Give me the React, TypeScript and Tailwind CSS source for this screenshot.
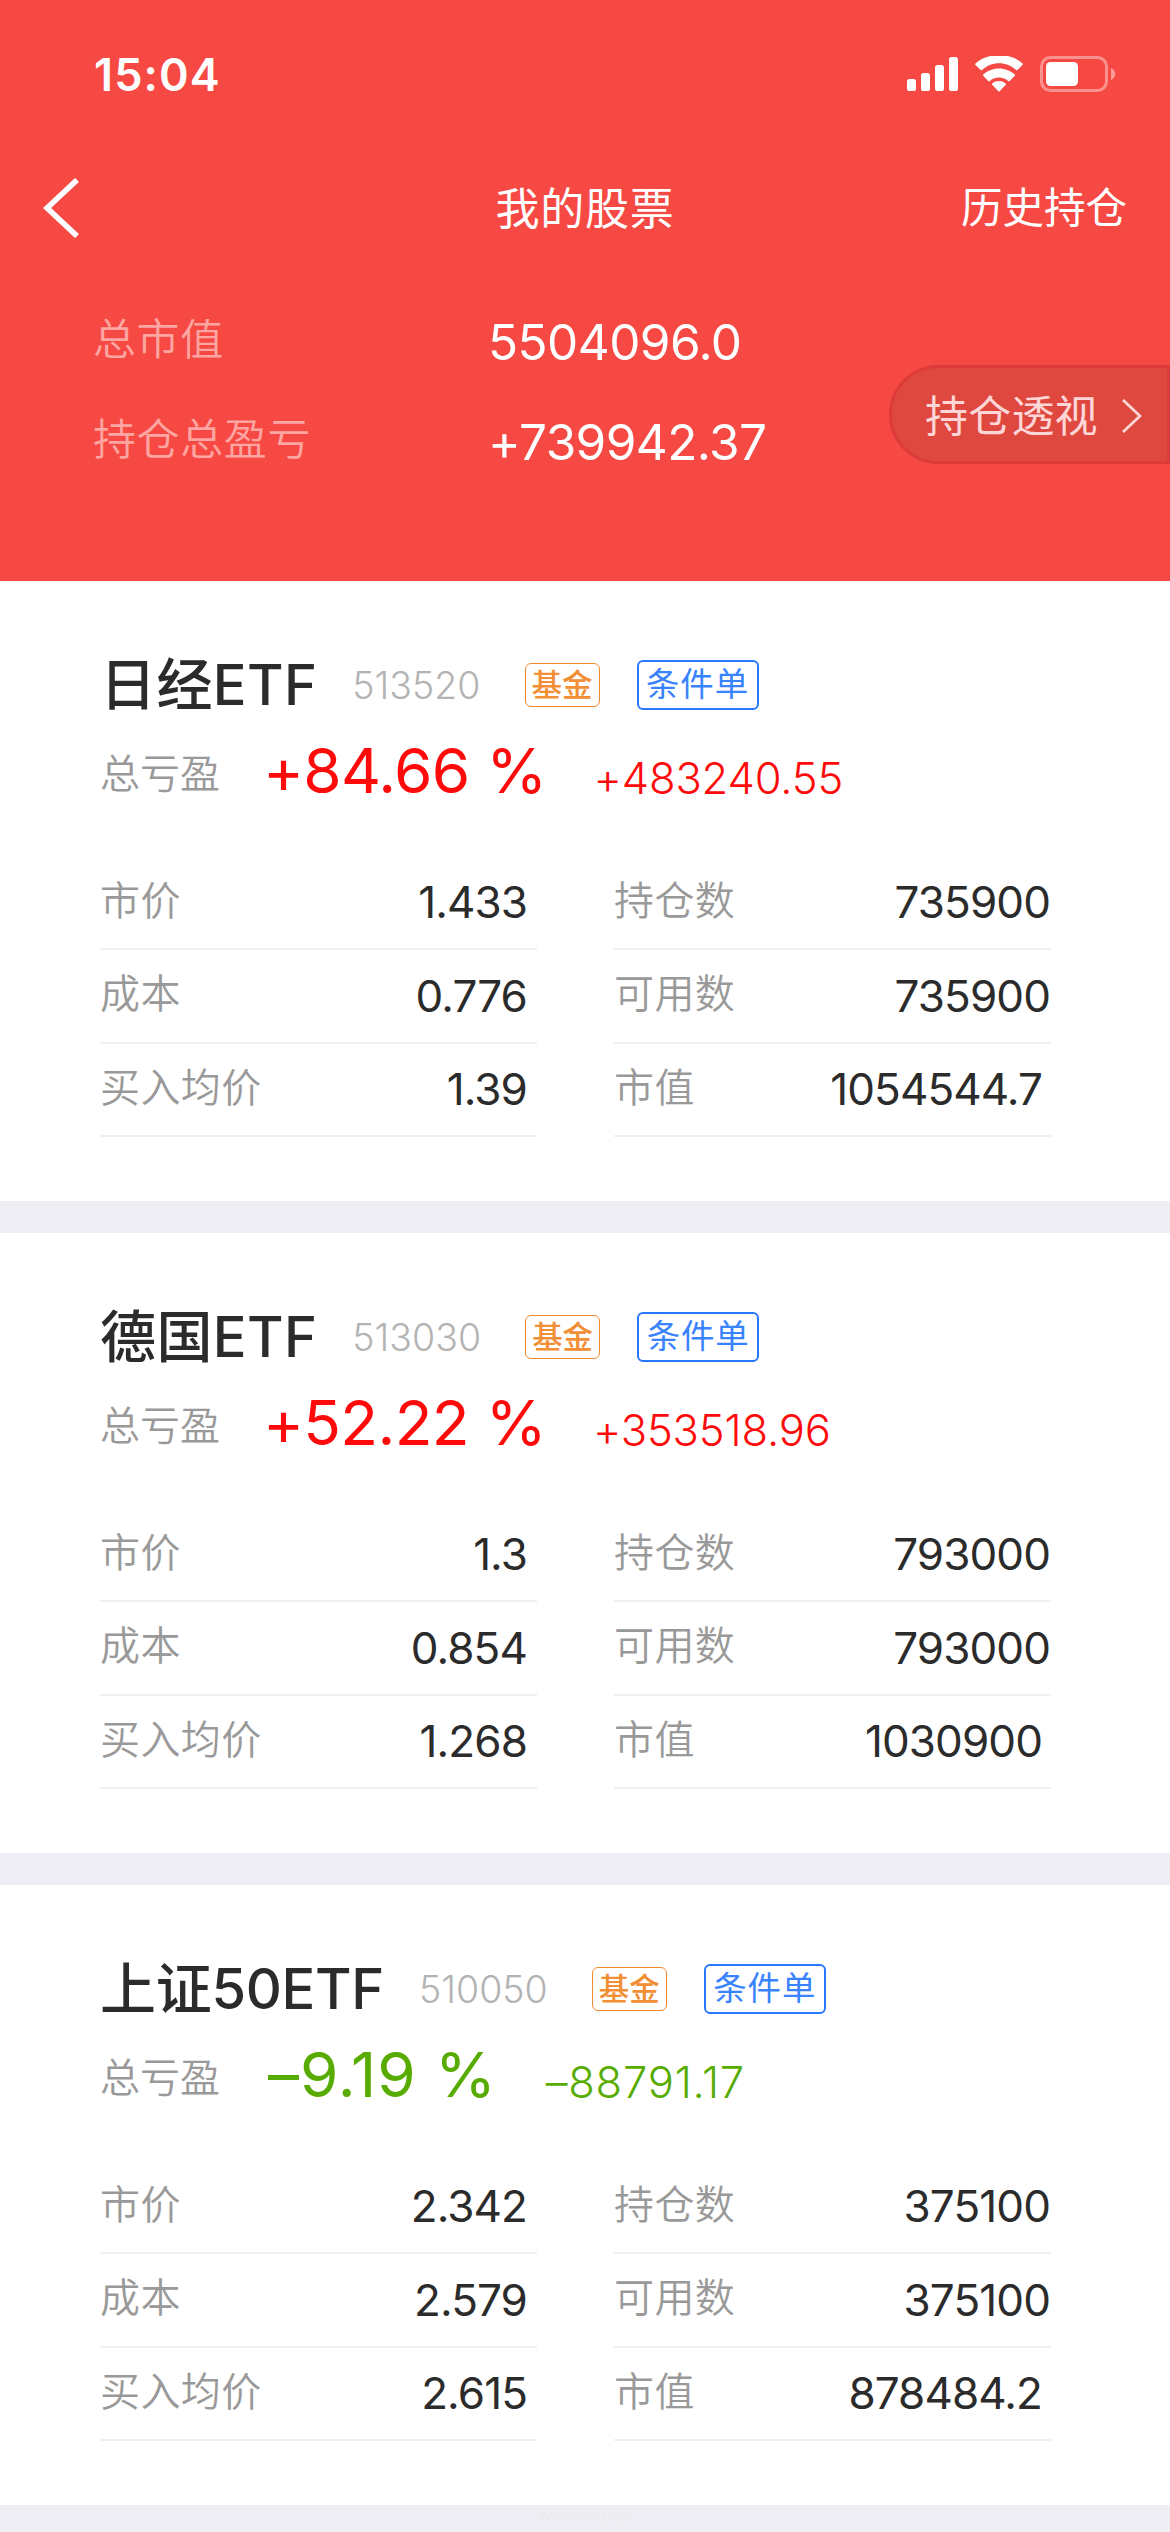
import React from 'react';
import clsx from 'clsx';

interface Holding {
  name: string;
  nameClass: string;
  code: string;
  percent: string;
  profit: string;
  isLoss?: boolean;
  left: [string, string][];
  right: [string, string][];
}

const holdings: Holding[] = [
  {
    name: '日经ETF',
    nameClass: 'tracking-[0.4px]',
    code: '513520',
    percent: '+84.66 %',
    profit: '+483240.55',
    left: [['市价', '1.433'], ['成本', '0.776'], ['买入均价', '1.39']],
    right: [['持仓数', '735900'], ['可用数', '735900'], ['市值', '1054544.7']],
  },
  {
    name: '德国ETF',
    nameClass: 'tracking-[0.4px]',
    code: '513030',
    percent: '+52.22 %',
    profit: '+353518.96',
    left: [['市价', '1.3'], ['成本', '0.854'], ['买入均价', '1.268']],
    right: [['持仓数', '793000'], ['可用数', '793000'], ['市值', '1030900']],
  },
  {
    name: '上证50ETF',
    nameClass: 'tracking-[-0.3px]',
    code: '510050',
    percent: '–9.19 %',
    profit: '–88791.17',
    isLoss: true,
    left: [['市价', '2.342'], ['成本', '2.579'], ['买入均价', '2.615']],
    right: [['持仓数', '375100'], ['可用数', '375100'], ['市值', '878484.2']],
  },
];

const StatusBar: React.FC = () => (
  <div className="flex h-[150px] items-center justify-between pl-[94px] pr-[54px]">
    <span className="mb-[2px] text-[45px] font-semibold leading-none tracking-[1.1px]">15:04</span>
    <div className="mb-[2px] flex items-center">
      <svg className="h-[36px] w-[52px]" viewBox="0 0 52 36" fill="currentColor">
        <rect x="0" y="23" width="9" height="12" rx="2.6" />
        <rect x="14" y="17" width="9" height="18" rx="2.6" />
        <rect x="28" y="9" width="9" height="26" rx="2.6" />
        <rect x="42" y="1" width="9" height="34" rx="2.6" />
      </svg>
      <svg className="ml-[16px] h-[36px] w-[48px]" viewBox="0 0 48 36" fill="currentColor">
        <path d="M24 7.2c6.600 0 12.600 2.600 17.100 6.900.35.33.9.33 1.240-.01l5.200-5.200a.9.9 0 0 0 0-1.300C41.300 1.700 33-.9 24-.9S6.700 1.700.46 7.600a.9.9 0 0 0 0 1.300l5.200 5.200c.34.34.89.34 1.240.01C11.400 9.800 17.400 7.200 24 7.200z" />
        <path d="M24 19c3.600 0 6.900 1.350 9.400 3.550.36.31.9.3 1.230-.03l5.200-5.250a.88.88 0 0 0-.02-1.280C35.600 12.100 30.100 9.800 24 9.800S12.400 12.100 8.190 15.990a.88.88 0 0 0-.02 1.280l5.200 5.250c.33.33.87.34 1.230.03C17.100 20.350 20.400 19 24 19z" transform="translate(0 2.600)" />
        <path d="M30.800 27.900c.36-.36.35-.95-.05-1.270A10.700 10.700 0 0 0 24 24.300c-2.560 0-4.900.88-6.750 2.330-.4.32-.41.91-.05 1.270l6.150 6.500c.36.36.94.36 1.300 0z" transform="translate(0 .8)" />
      </svg>
      <svg className="ml-[17px] h-[36px] w-[76px]" viewBox="0 0 76 36" fill="none">
        <rect x="1.500" y="1.500" width="65" height="33" rx="9" stroke="currentColor" strokeOpacity=".4" strokeWidth="3" />
        <rect x="6" y="6" width="32" height="24" rx="4.500" fill="currentColor" />
        <path d="M71 12v12c2.600-1.100 4.200-3.400 4.200-6s-1.600-4.900-4.200-6z" fill="currentColor" fillOpacity=".45" />
      </svg>
    </div>
  </div>
);

const Header: React.FC = () => (
  <header className="relative h-[581px] shrink-0 bg-[#f74943] text-white">
    <StatusBar />

    <div className="grid h-[118px] grid-cols-[1fr_auto_1fr] items-center px-[43px]">
      <button aria-label="返回" className="mb-[2px]">
        <svg className="h-[60px] w-[36px]" viewBox="0 0 36 60" fill="none" stroke="currentColor" strokeWidth="5.600">
          <path d="M34 2L4 30l30 28" />
        </svg>
      </button>
      <h1 className="text-[44px] leading-none tracking-[0.8px]">我的股票</h1>
      <span className="justify-self-end text-[41.5px] leading-none">历史持仓</span>
    </div>

    <div className="pl-[93px] pt-[22px] leading-none">
      <div className="flex h-[100px] items-center">
        <span className="w-[395px] pb-[2px] text-[43px] font-[350] tracking-[0.6px] text-[#fca5a1]">总市值</span>
        <span className="pt-[6px] text-[49.5px] tracking-[-0.56px]">5504096.0</span>
      </div>
      <div className="flex h-[100px] items-center">
        <span className="w-[395px] pb-[2px] text-[43px] font-[350] tracking-[0.6px] text-[#fca5a1]">持仓总盈亏</span>
        <span className="pt-[6px] text-[49.5px] tracking-[-0.6px]">+739942.37</span>
      </div>
    </div>

    {/* Floating shortcut */}
    <button className="absolute right-0 top-[365px] flex h-[99px] w-[281px] items-center rounded-l-full border-[3px] border-[#db3b39] bg-[#df483f] pl-[33px] pt-[3px] text-[#fdd6d7]">
      <span className="text-[43px] leading-none tracking-[0.2px]">持仓透视</span>
      <svg className="ml-[24px] h-[34px] w-[20px]" viewBox="0 0 20 34" fill="none" stroke="currentColor" strokeWidth="2.800">
        <path d="M1 1l17 16L1 33" />
      </svg>
    </button>
  </header>
);

const Column: React.FC<{ rows: [string, string][]; valueClass: string; lastClass: string }> = ({
  rows,
  valueClass,
  lastClass,
}) => (
  <div className="w-[437px]">
    {rows.map(([label, value], i) => (
      <div key={label} className="flex h-[93.5px] items-center justify-between border-b-2 border-[#f0f0f0] leading-none">
        <span className="pb-[3px] text-[40px] font-[350] tracking-[0.4px] text-[#999]">{label}</span>
        <span className={clsx('text-[44px] tracking-[-0.9px] text-[#2b2b2b]', i === rows.length - 1 ? lastClass : valueClass)}>
          {value}
        </span>
      </div>
    ))}
  </div>
);

const HoldingCard: React.FC<{ holding: Holding }> = ({ holding }) => (
  <section className="h-[620px] shrink-0 bg-white px-[100px] pt-[68px] leading-none">
    <div className="flex h-[72px] items-center">
      <h2 className={clsx('text-[56px] font-medium text-[#2b2b2b]', holding.nameClass)}>{holding.name}</h2>
      <span className="ml-[35px] pt-[2px] text-[37.5px] font-[320] text-[#b3b3b3]">{holding.code}</span>
      <span className="ml-[44px] flex h-[44px] w-[75px] items-center justify-center rounded-[6px] border-[1.5px] border-[#f28b2e] text-[30.5px] font-medium text-[#f28f36]">
        基金
      </span>
      <span className="ml-[37px] flex h-[50px] w-[122px] items-center justify-center rounded-[6px] border-2 border-[#2878ff] text-[33.5px] tracking-[0.8px] text-[#3a83ff]">
        条件单
      </span>
    </div>

    <div className={clsx('flex h-[100px] items-center', holding.isLoss ? 'text-[#58ab00]' : 'text-[#ff0a0a]')}>
      <span className="w-[163px] pt-[6px] text-[40px] font-[350] text-[#999]">总亏盈</span>
      <span className={clsx('whitespace-pre text-[62px]', holding.isLoss ? 'pl-[5px] tracking-[0.9px]' : 'tracking-[-0.67px]')}>
        {holding.percent}
      </span>
      <span
        className={clsx(
          'pt-[16px] text-[43.5px] font-[330]',
          holding.isLoss ? 'ml-[49px] tracking-[0.8px]' : 'ml-[47px] tracking-[-0.15px]'
        )}
      >
        {holding.profit}
      </span>
    </div>

    <div className="flex gap-[77px] pt-[35.5px]">
      <Column rows={holding.left} valueClass="pr-[10px]" lastClass="pr-[10px]" />
      <Column rows={holding.right} valueClass="pr-px" lastClass="pr-[9px]" />
    </div>
  </section>
);

export default function App() {
  return (
    <div className="relative flex h-[2532px] w-[1170px] flex-col overflow-hidden bg-[#efeef4] font-[Inter,'Noto_Sans_CJK_SC',sans-serif]">
      <Header />
      <main className="flex flex-col gap-[32px]">
        {holdings.map((holding) => (
          <HoldingCard key={holding.code} holding={holding} />
        ))}
      </main>
      <footer className="text-center font-['Noto_Sans',sans-serif] text-[15px] leading-[18px] text-[#ebebed]">www.ddrj.vip</footer>
    </div>
  );
}
